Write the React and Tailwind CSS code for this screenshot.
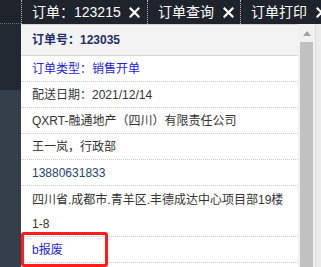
import React from "react";

const font = { fontFamily: '"Liberation Sans", "Noto Sans CJK SC", sans-serif' };

function CloseIcon() {
  return (
    <svg width="11" height="11" viewBox="0 0 11 11" className="shrink-0">
      <path d="M1.5 1.5 L9.5 9.5 M9.5 1.5 L1.5 9.5" stroke="#ffffff" strokeWidth="2.2" strokeLinecap="square" />
    </svg>
  );
}

const tabs = [
  { label: "订单：123215", w: "w-[126px]", pr: "pr-[7px]" },
  { label: "订单查询", w: "w-[93px]", pr: "pr-[6px]" },
  { label: "订单打印", w: "w-[93px]", pr: "pr-[6px]" },
];

const rows = [
  { text: "订单类型：销售开单", cls: "text-[#2323d6]" },
  { text: "配送日期：2021/12/14", cls: "text-[#333333]" },
  { text: "QXRT-融通地产（四川）有限责任公司", cls: "text-[#333333]" },
  { text: "王一岚，行政部", cls: "text-[#333333]" },
  { text: "13880631833", cls: "text-[#23466e]" },
];

export default function App() {
  return (
    <div className="flex h-[267px] w-[321px] overflow-hidden bg-[#1f232b] text-[12px]" style={font}>
      {/* left rail */}
      <div className="flex w-[21px] shrink-0 flex-col">
        <div className="h-[24px] border-b border-dotted border-[#6b7280] bg-[#1f232b]" />
        <div className="h-[66px] bg-[#222831]" />
        <div className="flex-1 bg-[#353f4b]" />
      </div>

      <div className="flex min-w-0 flex-1 flex-col">
        {/* tab bar */}
        <div className="flex h-[24px] shrink-0 items-center whitespace-nowrap bg-[#1f232b] text-[14px] text-white">
          {tabs.map((t) => (
            <div
              key={t.label}
              className={`flex h-full shrink-0 items-center border-l border-dotted border-[#b8bcc4] pl-[10px] ${t.w} ${t.pr}`}
            >
              <span className="leading-none">{t.label}</span>
              <span className="ml-auto">
                <CloseIcon />
              </span>
            </div>
          ))}
        </div>

        {/* content */}
        <div className="flex min-h-0 flex-1">
          <div className="relative w-[277px] shrink-0 border-t border-[#d6d6d6] bg-white">
            <div className="flex h-[31px] items-center border-b border-[#d4d4d4] bg-[#f3f3f3] pl-[11px] font-bold text-[#1f2d6e]">
              订单号：123035
            </div>
            {rows.map((r) => (
              <div
                key={r.text}
                className={`flex h-[26px] items-center border-b border-dotted border-[#c4c4c4] pl-[11px] ${r.cls}`}
              >
                {r.text}
              </div>
            ))}
            <div className="border-b border-dotted border-[#c4c4c4] pl-[11px] pt-[2px] leading-[24px] text-[#333333]">
              四川省.成都市.青羊区.丰德成达中心项目部19楼
              <br />
              1-8
            </div>
            <div className="flex h-[26px] items-center border-b border-dotted border-[#c4c4c4] pl-[11px] text-[#2323d6]">
              b报废
            </div>
            <div className="pointer-events-none absolute left-0 top-[207px] h-[35px] w-[87px] rounded-[3px] border-[3px] border-[#ff1c1c]" />
          </div>

          {/* scrollbar */}
          <div className="flex w-[17px] shrink-0 flex-col items-center bg-[#f1f1f1]">
            <div className="flex h-[18px] items-center justify-center">
              <svg width="8" height="5" viewBox="0 0 8 5">
                <path d="M4 0 L8 5 L0 5 Z" fill="#a3a3a3" />
              </svg>
            </div>
            <div className="w-[13px] flex-1 bg-[#c1c1c1]" />
          </div>
          <div className="w-[6px] shrink-0 border-l border-[#dcdcdc] bg-[#ebebeb]" />
        </div>
      </div>
    </div>
  );
}
